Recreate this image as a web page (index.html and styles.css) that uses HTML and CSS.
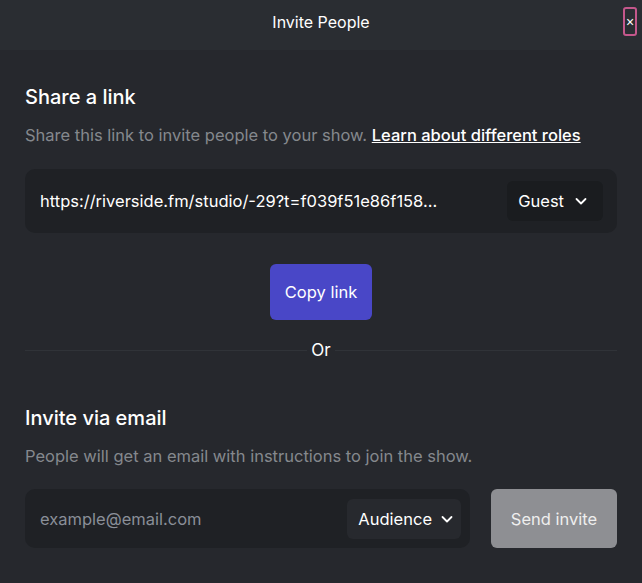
FILE: index.html
```html
<!DOCTYPE html>
<html lang="en">
<head>
    <meta charset="UTF-8">
    <title>Invite People</title>
    <link rel="stylesheet" href="styles.css">
</head>
<body>
    <div class="header">
        <span>Invite People</span>
        <button class="close-btn">×</button>
    </div>
    <div class="content">
        <h2>Share a link</h2>
        <p class="hint">Share this link to invite people to your show. <a href="#">Learn about different roles</a></p>
        <div class="link-box">
            <span class="link-url">https://riverside.fm/studio/-29?t=f039f51e86f158...</span>
            <div class="role-select dark">
                Guest
                <svg width="14" height="14" viewBox="0 0 14 14"><path d="M2.5 5l4.5 4.5 4.5-4.5" fill="none" stroke="#fff" stroke-width="1.8" stroke-linecap="round" stroke-linejoin="round"/></svg>
            </div>
        </div>
        <div class="copy-row">
            <button class="copy-btn">Copy link</button>
        </div>
        <div class="divider"><span>Or</span></div>
        <h2>Invite via email</h2>
        <p class="hint">People will get an email with instructions to join the show.</p>
        <div class="email-row">
            <div class="email-box">
                <span class="placeholder">example@email.com</span>
                <div class="role-select">
                    Audience
                    <svg width="14" height="14" viewBox="0 0 14 14"><path d="M2.5 5l4.5 4.5 4.5-4.5" fill="none" stroke="#fff" stroke-width="1.8" stroke-linecap="round" stroke-linejoin="round"/></svg>
                </div>
            </div>
            <button class="send-btn">Send invite</button>
        </div>
    </div>
</body>
</html>
```

FILE: styles.css
```css
body, html {
    margin: 0;
    padding: 0;
    height: 100%;
    font-family: Inter, "Noto Sans", sans-serif;
    background-color: #26282d;
    color: #fff;
}
.header {
    position: relative;
    height: 50px;
    box-sizing: border-box;
    padding-bottom: 6px;
    display: flex;
    justify-content: center;
    align-items: center;
    background-color: #2a2d32;
    font-size: 16px;
}
.close-btn {
    position: absolute;
    top: 7px;
    right: 5px;
    width: 14px;
    height: 29px;
    padding: 0;
    border: 2px solid #c4578b;
    border-radius: 3px;
    background: transparent;
    color: #fff;
    font-size: 14px;
    line-height: 1;
}
.content {
    padding: 35px 25px 0;
}
h2 {
    margin: 0;
    font-size: 20px;
    font-weight: 500;
    line-height: 24px;
}
.hint {
    margin: 14px 0 0;
    font-size: 16.5px;
    line-height: 24px;
    color: #85888d;
}
.hint a {
    color: #fff;
    font-weight: 500;
    text-decoration: underline;
}
.link-box {
    margin-top: 22px;
    height: 64px;
    display: flex;
    align-items: center;
    justify-content: space-between;
    padding: 0 14px 0 15px;
    background-color: #1f2125;
    border-radius: 10px;
}
.link-url {
    font-size: 16.5px;
}
.role-select {
    display: flex;
    align-items: center;
    gap: 8px;
    height: 40px;
    padding: 0 7px 0 11px;
    border-radius: 6px;
    background-color: #27292e;
    font-size: 16.5px;
}
.role-select.dark {
    gap: 10px;
    padding: 0 15px 0 11px;
    background-color: #1a1c1f;
}
.copy-row {
    display: flex;
    justify-content: center;
    margin-top: 31px;
}
.copy-btn {
    width: 102px;
    height: 56px;
    border: none;
    border-radius: 6px;
    background-color: #4947c7;
    color: #fff;
    font-family: inherit;
    font-size: 16.5px;
}
.divider {
    position: relative;
    margin-top: 30px;
    border-top: 1px solid #303338;
    display: flex;
    justify-content: center;
}
.divider span {
    margin-top: -12px;
    padding: 0 4px;
    background-color: #26282d;
    font-size: 17px;
    line-height: 22px;
}
.divider + h2 {
    margin-top: 45px;
}
.email-row {
    display: flex;
    gap: 21px;
    margin-top: 21px;
}
.email-box {
    flex: 1;
    height: 59px;
    display: flex;
    align-items: center;
    justify-content: space-between;
    padding: 0 9px 0 15px;
    background-color: #1f2125;
    border-radius: 10px;
}
.placeholder {
    color: #8a8f98;
    font-size: 16.5px;
}
.send-btn {
    width: 126px;
    height: 59px;
    border: none;
    border-radius: 6px;
    background-color: #8e8f93;
    color: #eeeeee;
    font-family: inherit;
    font-size: 16.5px;
}
```
